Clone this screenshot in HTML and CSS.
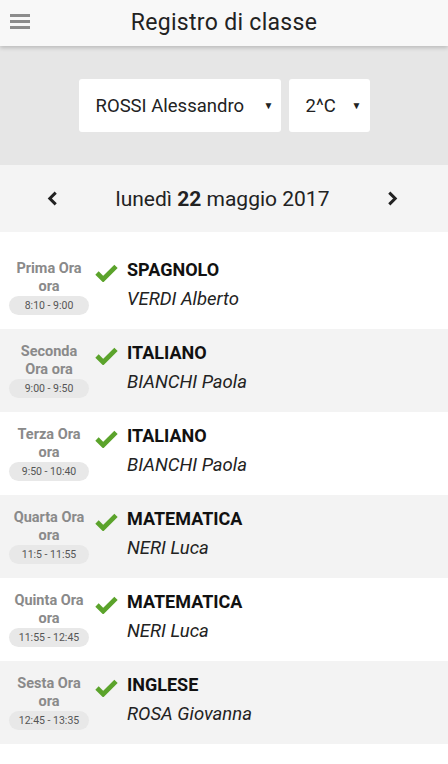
FILE: index.html
```html
<!DOCTYPE html>
<html lang="it">
<head>
  <meta charset="UTF-8">
  <meta name="viewport" content="width=device-width, initial-scale=1.0">
  <title>Registro di classe</title>
  <link rel="stylesheet" href="styles.css">
</head>
<body>
  <!-- Top bar -->
  <div class="topbar">
    <div class="menu-btn">
      <span></span><span></span><span></span>
    </div>
    <h1>Registro di classe</h1>
  </div>

  <!-- Filters -->
  <div class="filters">
    <div class="select select-student">
      <span>ROSSI Alessandro</span>
      <span class="arrow">&#9660;</span>
    </div>
    <div class="select select-class">
      <span>2^C</span>
      <span class="arrow">&#9660;</span>
    </div>
  </div>

  <!-- Day navigation -->
  <div class="day-nav">
    <svg class="chev" viewBox="0 0 10 14" width="11" height="15"><path d="M8 1.5 L2.5 7 L8 12.5" fill="none" stroke="#222" stroke-width="2.8"/></svg>
    <div class="day">lunedì <b>22</b> maggio 2017</div>
    <svg class="chev" viewBox="0 0 10 14" width="11" height="15"><path d="M2 1.5 L7.5 7 L2 12.5" fill="none" stroke="#222" stroke-width="2.8"/></svg>
  </div>

  <ul class="lessons">
    <li class="lesson">
      <div class="slot">
        <div class="slot-name">Prima Ora<br>ora</div>
        <div class="slot-time">8:10 - 9:00</div>
      </div>
      <svg class="check" viewBox="0 0 24 20" width="23" height="19"><path d="M2 10.5 L8.5 17 L22 3.5" fill="none" stroke="#5ba32b" stroke-width="5"/></svg>
      <div class="info">
        <div class="subject">SPAGNOLO</div>
        <div class="teacher">VERDI Alberto</div>
      </div>
    </li>
    <li class="lesson">
      <div class="slot">
        <div class="slot-name">Seconda<br>Ora ora</div>
        <div class="slot-time">9:00 - 9:50</div>
      </div>
      <svg class="check" viewBox="0 0 24 20" width="23" height="19"><path d="M2 10.5 L8.5 17 L22 3.5" fill="none" stroke="#5ba32b" stroke-width="5"/></svg>
      <div class="info">
        <div class="subject">ITALIANO</div>
        <div class="teacher">BIANCHI Paola</div>
      </div>
    </li>
    <li class="lesson">
      <div class="slot">
        <div class="slot-name">Terza Ora<br>ora</div>
        <div class="slot-time">9:50 - 10:40</div>
      </div>
      <svg class="check" viewBox="0 0 24 20" width="23" height="19"><path d="M2 10.5 L8.5 17 L22 3.5" fill="none" stroke="#5ba32b" stroke-width="5"/></svg>
      <div class="info">
        <div class="subject">ITALIANO</div>
        <div class="teacher">BIANCHI Paola</div>
      </div>
    </li>
    <li class="lesson">
      <div class="slot">
        <div class="slot-name">Quarta Ora<br>ora</div>
        <div class="slot-time">11:5 - 11:55</div>
      </div>
      <svg class="check" viewBox="0 0 24 20" width="23" height="19"><path d="M2 10.5 L8.5 17 L22 3.5" fill="none" stroke="#5ba32b" stroke-width="5"/></svg>
      <div class="info">
        <div class="subject">MATEMATICA</div>
        <div class="teacher">NERI Luca</div>
      </div>
    </li>
    <li class="lesson">
      <div class="slot">
        <div class="slot-name">Quinta Ora<br>ora</div>
        <div class="slot-time">11:55 - 12:45</div>
      </div>
      <svg class="check" viewBox="0 0 24 20" width="23" height="19"><path d="M2 10.5 L8.5 17 L22 3.5" fill="none" stroke="#5ba32b" stroke-width="5"/></svg>
      <div class="info">
        <div class="subject">MATEMATICA</div>
        <div class="teacher">NERI Luca</div>
      </div>
    </li>
    <li class="lesson">
      <div class="slot">
        <div class="slot-name">Sesta Ora<br>ora</div>
        <div class="slot-time">12:45 - 13:35</div>
      </div>
      <svg class="check" viewBox="0 0 24 20" width="23" height="19"><path d="M2 10.5 L8.5 17 L22 3.5" fill="none" stroke="#5ba32b" stroke-width="5"/></svg>
      <div class="info">
        <div class="subject">INGLESE</div>
        <div class="teacher">ROSA Giovanna</div>
      </div>
    </li>
  </ul>
</body>
</html>
```
FILE: styles.css
```css
body {
  font-family: Roboto, "Liberation Sans", sans-serif;
  background-color: #fff;
  color: #222;
  margin: 0;
  padding: 0;
}

.topbar {
  position: relative;
  height: 46px;
  background-color: #f8f8f8;
  box-shadow: 0 2px 4px rgba(0, 0, 0, 0.18);
  display: flex;
  align-items: center;
  justify-content: center;
  z-index: 2;
}

.menu-btn {
  position: absolute;
  left: 10px;
  top: 14px;
  width: 20px;
  display: flex;
  flex-direction: column;
  gap: 3px;
}

.menu-btn span {
  display: block;
  height: 3px;
  background-color: #8c8c8c;
}

.topbar h1 {
  margin: 0 0 2px;
  font-size: 23px;
  font-weight: normal;
  letter-spacing: 0.3px;
  color: #222;
}

.filters {
  background-color: #e6e6e6;
  height: 119px;
  display: flex;
  justify-content: center;
  align-items: center;
  gap: 8px;
  box-sizing: border-box;
}

.select {
  background-color: #fff;
  border-radius: 3px;
  height: 53px;
  display: flex;
  align-items: center;
  justify-content: space-between;
  font-size: 18.5px;
  color: #222;
  box-sizing: border-box;
}

.select-student {
  width: 202px;
  padding: 0 7px 0 17px;
}

.select-class {
  width: 81px;
  padding: 0 8px 0 17px;
}

.arrow {
  font-size: 10px;
}

.day-nav {
  background-color: #f4f4f4;
  height: 67px;
  display: flex;
  align-items: center;
  justify-content: space-between;
  padding: 0 50px 0 47px;
}

.day {
  font-size: 21px;
  color: #222;
}

.lessons {
  list-style: none;
  margin: 14px 0 0;
  padding: 0;
}

.lesson {
  height: 83px;
  display: flex;
  align-items: flex-start;
  box-sizing: border-box;
  padding-top: 12px;
}

.lesson:nth-child(even) {
  background-color: #f3f3f3;
}

.slot {
  width: 80px;
  margin-left: 9px;
  padding-top: 2px;
  text-align: center;
}

.slot-name {
  font-size: 14.5px;
  font-weight: bold;
  line-height: 18px;
  color: #8a8a8a;
}

.slot-time {
  background-color: #e8e8e8;
  border-radius: 10px;
  font-size: 10.5px;
  line-height: 19px;
  color: #555;
}

.check {
  margin: 5px 0 0 6px;
}

.info {
  margin-left: 9px;
}

.subject {
  font-size: 18px;
  font-weight: bold;
  line-height: 24px;
  color: #111;
}

.teacher {
  font-size: 18.5px;
  font-style: italic;
  line-height: 24px;
  margin-top: 5px;
  color: #222;
}
```
